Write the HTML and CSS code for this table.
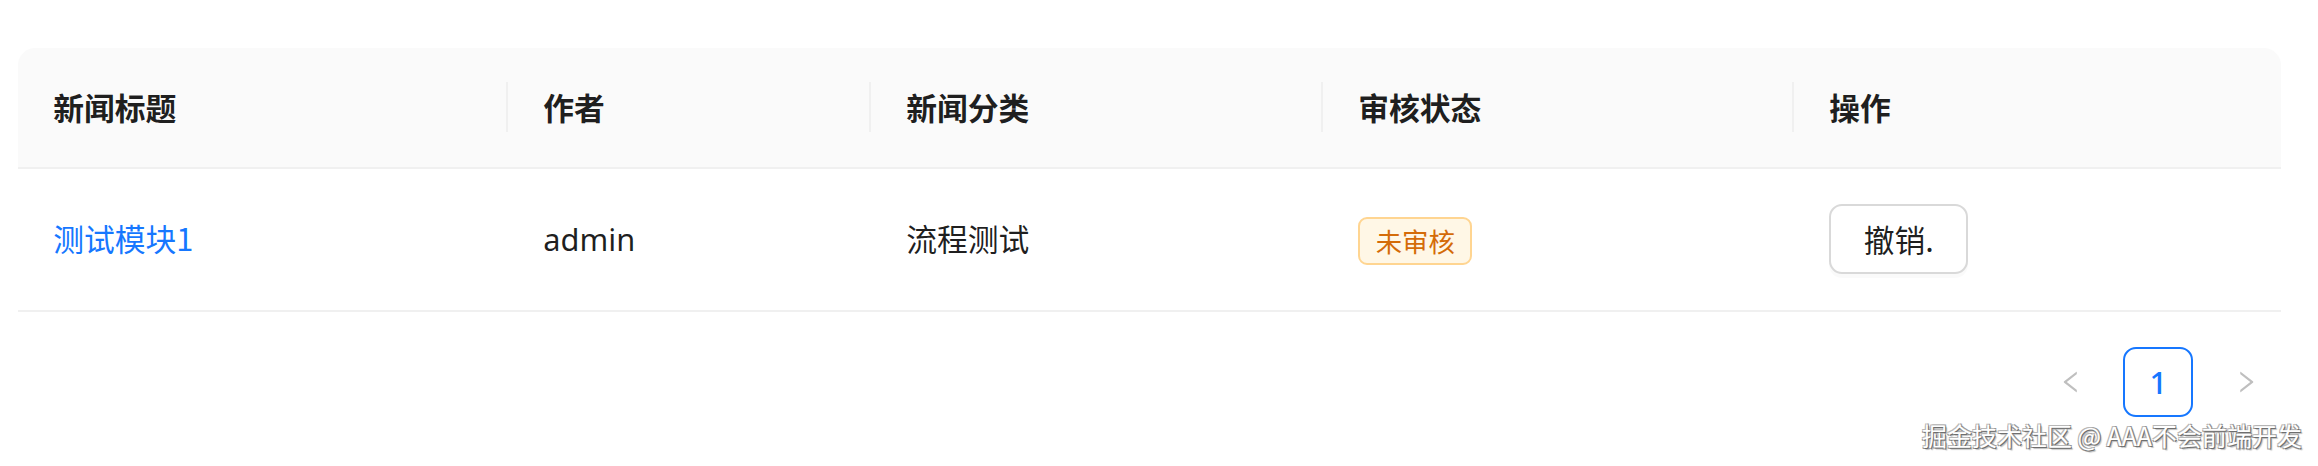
FILE: index.html
```html
<!DOCTYPE html>
<html lang="zh-CN">
<head>
<meta charset="utf-8">
<title>新闻列表</title>
<link rel="stylesheet" href="styles.css">
</head>
<body>
<div class="page">
  <table class="news-table">
    <colgroup>
      <col class="c1"><col class="c2"><col class="c3"><col class="c4"><col class="c5">
    </colgroup>
    <thead>
      <tr>
        <th>新闻标题</th>
        <th>作者</th>
        <th>新闻分类</th>
        <th>审核状态</th>
        <th>操作</th>
      </tr>
    </thead>
    <tbody>
      <tr>
        <td><a class="link" href="#">测试模块1</a></td>
        <td>admin</td>
        <td>流程测试</td>
        <td><span class="tag">未审核</span></td>
        <td><button class="btn">撤销.</button></td>
      </tr>
    </tbody>
  </table>
  <div class="pagination">
    <span class="pg-nav">
      <svg viewBox="0 0 1024 1024" class="pg-icon"><path d="M724 218.3V141c0-6.7-7.7-10.4-12.9-6.3L260.3 486.8a31.86 31.86 0 000 50.3l450.8 352.1c5.3 4.1 12.9.4 12.9-6.3v-77.3c0-4.9-2.3-9.6-6.1-12.6l-360-281 360-281.1c3.8-3 6.1-7.7 6.1-12.6z"/></svg>
    </span>
    <span class="pg-item">1</span>
    <span class="pg-nav">
      <svg viewBox="0 0 1024 1024" class="pg-icon"><path d="M765.7 486.8L314.9 134.7A7.97 7.97 0 00302 141v77.3c0 4.9 2.3 9.6 6.1 12.6l360 281.1-360 281.1c-3.9 3-6.1 7.7-6.1 12.6V883c0 6.7 7.7 10.4 12.9 6.3l450.8-352.1a31.96 31.96 0 000-50.4z"/></svg>
    </span>
  </div>
  <div class="watermark">掘金技术社区 @ AAA不会前端开发</div>
</div>
</body>
</html>
```

FILE: styles.css
```css
html, body {
  margin: 0;
  padding: 0;
  background: #ffffff;
}

.page {
  position: relative;
  height: 466px;
  box-sizing: border-box;
  padding: 48px 37px 0 18px;
  font-family: "Noto Sans", "Noto Sans CJK SC", sans-serif;
  color: rgba(0, 0, 0, 0.88);
}

.news-table {
  width: 2263px;
  table-layout: fixed;
  border-collapse: separate;
  border-spacing: 0;
  font-size: 30.8px;
}

.c1 { width: 490px; }
.c2 { width: 363px; }
.c3 { width: 452px; }
.c4 { width: 471px; }
.c5 { width: 487px; }

.news-table th {
  position: relative;
  text-align: left;
  font-family: "Noto Sans CJK SC", sans-serif;
  font-weight: 700;
  background: #fafafa;
  padding: 35.2px;
  line-height: 48.4px;
  height: 48.4px;
  border-bottom: 2px solid #f0f0f0;
  color: rgba(0, 0, 0, 0.88);
}

.news-table th:first-child {
  border-top-left-radius: 17.6px;
}

.news-table th:last-child {
  border-top-right-radius: 17.6px;
}

.news-table th:not(:last-child)::before {
  content: "";
  position: absolute;
  right: 0;
  top: 50%;
  width: 2px;
  height: 50px;
  transform: translateY(-50%);
  background: #f0f0f0;
}

.news-table td {
  padding: 35.2px;
  line-height: 48.4px;
  height: 70.4px;
  vertical-align: middle;
  border-bottom: 2px solid #f0f0f0;
}

.link {
  color: #1677ff;
  text-decoration: none;
  font-family: "Noto Sans CJK SC", sans-serif;
}

.tag {
  display: inline-block;
  box-sizing: border-box;
  height: 48px;
  line-height: 43px;
  padding: 0 15.5px;
  font-size: 26.4px;
  color: #d46b08;
  background: #fff7e6;
  border: 2px solid #ffd591;
  border-radius: 9px;
  vertical-align: middle;
  font-family: "Noto Sans CJK SC", sans-serif;
}

.btn {
  display: inline-block;
  box-sizing: border-box;
  height: 70px;
  padding: 0 32.5px;
  font-size: 30.8px;
  font-family: "Noto Sans CJK SC", sans-serif;
  color: rgba(0, 0, 0, 0.88);
  background: #ffffff;
  border: 2px solid #d9d9d9;
  border-radius: 13px;
  box-shadow: 0 4px 0 rgba(0, 0, 0, 0.02);
  vertical-align: middle;
  line-height: 66px;
}

.pagination {
  display: flex;
  justify-content: flex-end;
  gap: 17.6px;
  margin-top: 35px;
  width: 2263px;
}

.pg-nav,
.pg-item {
  box-sizing: border-box;
  width: 70px;
  height: 70px;
  display: flex;
  align-items: center;
  justify-content: center;
  border-radius: 13px;
}

.pg-icon {
  width: 28px;
  height: 28px;
  fill: #bfbfbf;
}

.pg-item {
  border: 2.2px solid #1677ff;
  color: #1677ff;
  font-weight: 500;
  font-size: 30.8px;
  font-family: "Noto Sans", sans-serif;
}

.watermark {
  position: absolute;
  right: 16px;
  top: 420px;
  font-size: 25px;
  line-height: 30px;
  font-family: "Noto Sans CJK SC", sans-serif;
  color: #ffffff;
  text-shadow: 1px 1px 0 #6e6e6e, -1px -1px 0 #b8b8b8, 1px -1px 0 #999999, -1px 1px 0 #999999, 2px 2px 1px rgba(0,0,0,0.25);
  white-space: nowrap;
}
```
